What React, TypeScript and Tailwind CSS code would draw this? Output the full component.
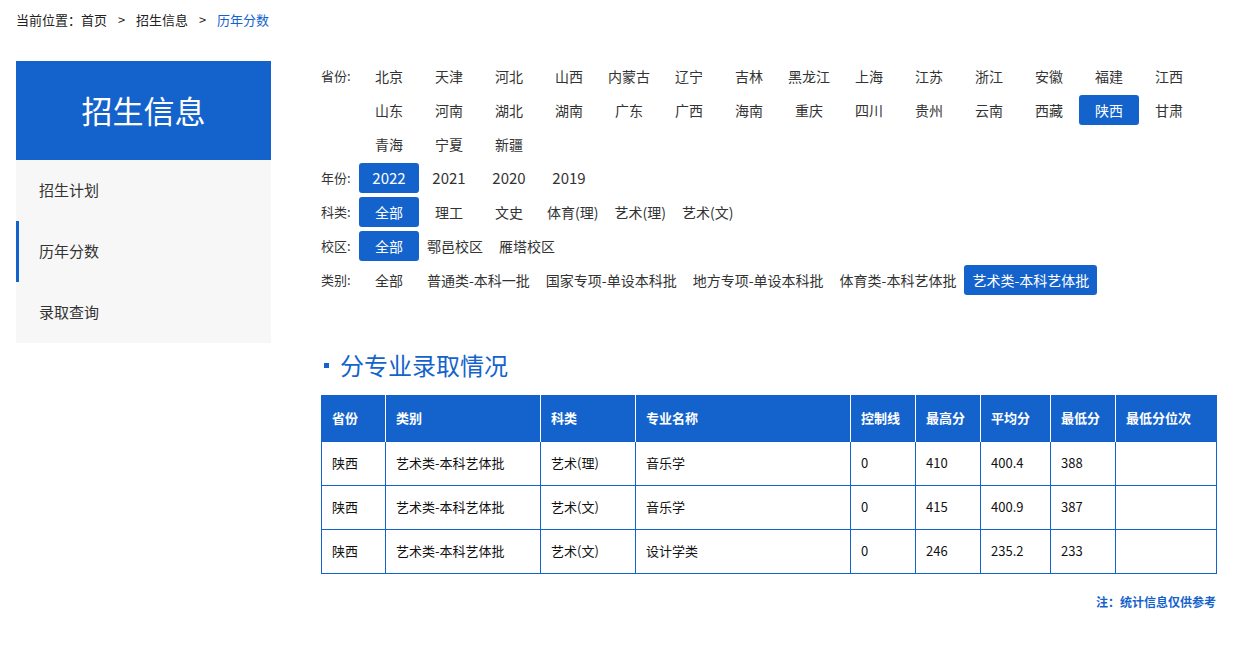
import React from "react";

const provinces = ["北京","天津","河北","山西","内蒙古","辽宁","吉林","黑龙江","上海","江苏","浙江","安徽","福建","江西","山东","河南","湖北","湖南","广东","广西","海南","重庆","四川","贵州","云南","西藏","陕西","甘肃","青海","宁夏","新疆"];

function Opt({ t, active }: { t: string; active?: boolean }) {
  return (
    <span className={`min-w-[60px] h-[30px] px-2 flex items-center justify-center whitespace-nowrap rounded-[3px] ${active ? "bg-[#1463cc] text-white" : "text-[#333]"}`}>{t}</span>
  );
}

function Row({ label, items, active, big }: { label: string; items: string[]; active: string; big?: boolean }) {
  return (
    <div className="flex items-start mb-[4px]">
      <span className="w-[38px] h-[30px] flex items-center text-[13px] text-[#333]">{label}</span>
      <div className={`flex flex-wrap w-[840px] gap-y-[4px] ${big ? "text-[15px]" : "text-[14px]"}`}>
        {items.map((t) => <Opt key={t} t={t} active={t === active} />)}
      </div>
    </div>
  );
}

const cols = [64, 155, 95, 215, 65, 65, 70, 65, 101];
const heads = ["省份","类别","科类","专业名称","控制线","最高分","平均分","最低分","最低分位次"];
const rows = [
  ["陕西","艺术类-本科艺体批","艺术(理)","音乐学","0","410","400.4","388",""],
  ["陕西","艺术类-本科艺体批","艺术(文)","音乐学","0","415","400.9","387",""],
  ["陕西","艺术类-本科艺体批","艺术(文)","设计学类","0","246","235.2","233",""],
];

export default function App() {
  return (
    <div className="w-[1249px] h-[647px] bg-white text-[#333] relative" style={{ fontFamily: '"Noto Sans CJK SC", "Noto Sans", sans-serif' }}>
      <div className="pl-4 pt-[10px] h-[61px] text-[13px] text-[#222]">
        当前位置：首页 <span className="mx-2">&gt;</span> 招生信息 <span className="mx-2">&gt;</span> <span className="text-[#1463cc]">历年分数</span>
      </div>
      <div className="flex">
        <div className="ml-4 w-[255px] shrink-0">
          <div className="h-[99px] bg-[#1463cc] text-white text-[31px] flex items-center justify-center">招生信息</div>
          <div className="bg-[#f7f7f7] text-[15px]">
            <div className="h-[61px] flex items-center pl-[23px]">招生计划</div>
            <div className="h-[61px] flex items-center pl-[23px] border-l-[3px] border-[#1463cc] -ml-0 " style={{ paddingLeft: 20 }}>历年分数</div>
            <div className="h-[61px] flex items-center pl-[23px]">录取查询</div>
          </div>
        </div>
        <div className="ml-[50px] flex-1 pr-[33px]">
          <Row label="省份:" items={provinces} active="陕西" />
          <Row label="年份:" items={["2022","2021","2020","2019"]} active="2022" big />
          <Row label="科类:" items={["全部","理工","文史","体育(理)","艺术(理)","艺术(文)"]} active="全部" />
          <Row label="校区:" items={["全部","鄠邑校区","雁塔校区"]} active="全部" />
          <Row label="类别:" items={["全部","普通类-本科一批","国家专项-单设本科批","地方专项-单设本科批","体育类-本科艺体批","艺术类-本科艺体批"]} active="艺术类-本科艺体批" />
          <div className="mt-[46px] h-[48px] flex items-center text-[#1463cc] text-[24px]">
            <span className="w-[5px] h-[5px] bg-[#1463cc] ml-[3px] mr-[11px]" />分专业录取情况
          </div>
          <table className="border-collapse text-[13px] w-[895px] table-fixed mt-[6px]">
            <colgroup>{cols.map((w, i) => <col key={i} style={{ width: w }} />)}</colgroup>
            <thead>
              <tr className="bg-[#1463cc] text-white h-[46px]">
                {heads.map((h) => <th key={h} className="text-left font-bold pl-[10px] border-x border-white first:border-l-[#1463cc] last:border-r-[#1463cc]">{h}</th>)}
              </tr>
            </thead>
            <tbody>
              {rows.map((r, i) => (
                <tr key={i} className="h-[44px]">
                  {r.map((c, j) => <td key={j} className="border border-[#1463cc] pl-[10px] text-[#111]">{c}</td>)}
                </tr>
              ))}
            </tbody>
          </table>
          <div className="text-right text-[#1463cc] font-bold text-[12px] mt-[19px] w-[895px]">注：统计信息仅供参考</div>
        </div>
      </div>
    </div>
  );
}
